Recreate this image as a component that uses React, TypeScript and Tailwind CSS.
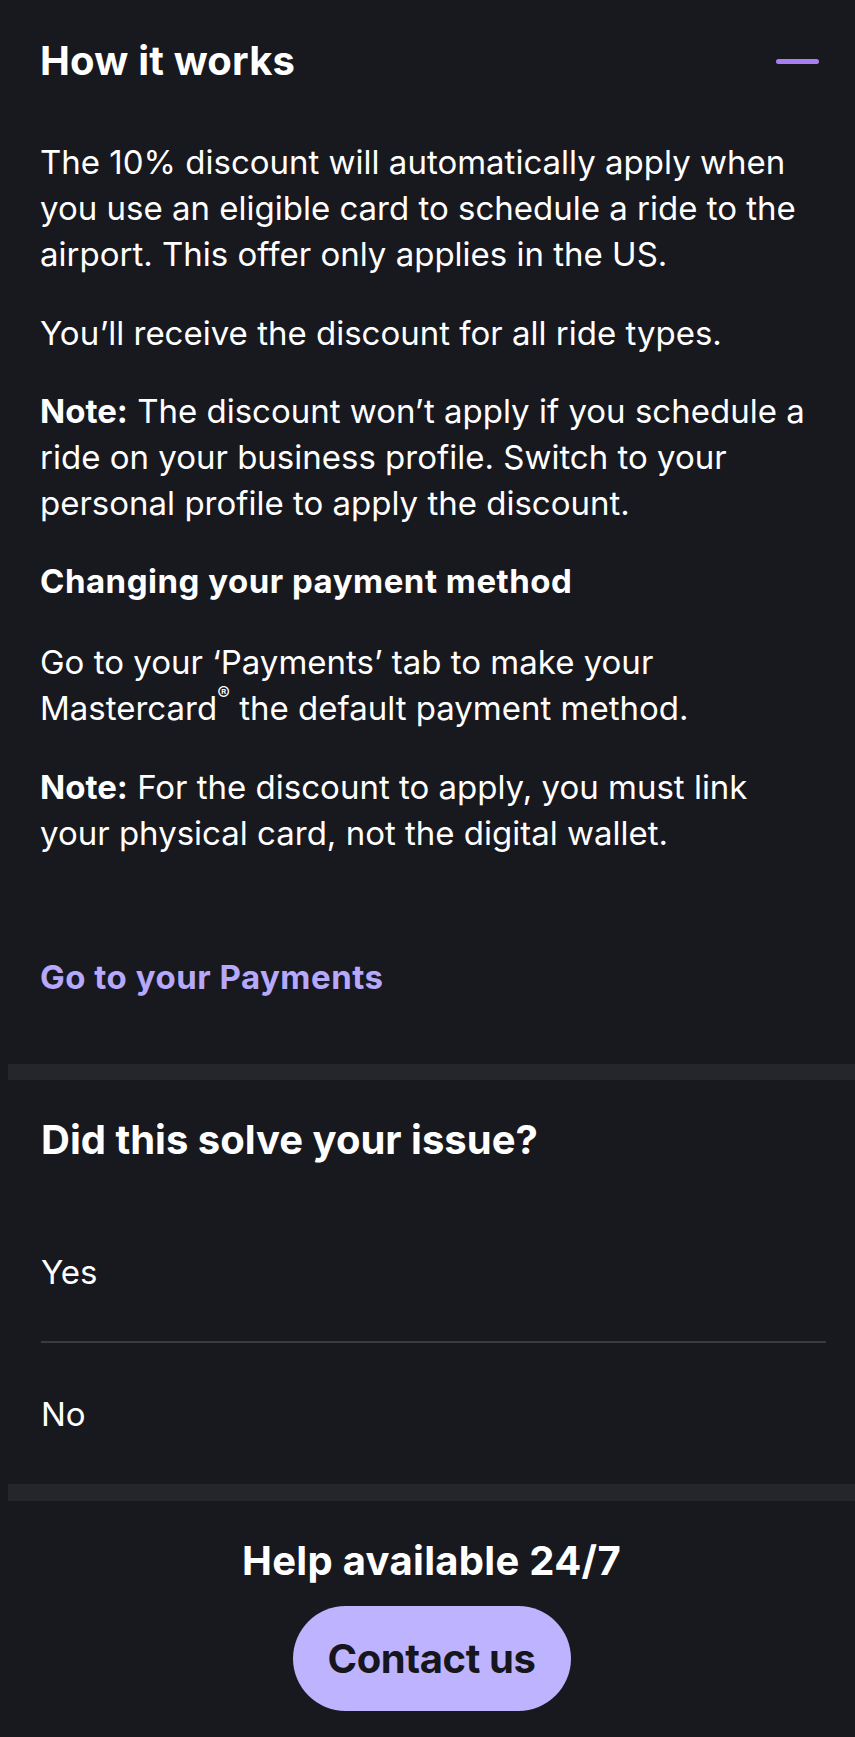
import React from "react";

const font = { fontFamily: "Inter, 'Noto Sans', sans-serif" };

export default function App() {
  return (
    <div
      className="w-[855px] min-h-[1737px] bg-[#18181f] text-white pl-[8px]"
      style={font}
    >
      {/* How it works */}
      <section className="pl-[32px] pr-[29px] pt-[37px]">
        <div className="flex items-center justify-between h-[48px]">
          <h2 className="text-[40px] leading-[48px] font-bold tracking-[0.2px]">How it works</h2>
          <span className="block w-[43px] h-[5px] rounded-full bg-[#a77ff0] mr-[7px]" />
        </div>
        <div className="mt-[54px] text-[33px] leading-[46px] whitespace-nowrap">
          <p>
            The 10% discount will automatically apply when
            <br />
            you use an eligible card to schedule a ride to the
            <br />
            airport. This offer only applies in the US.
          </p>
          <p className="mt-[33px]">You’ll receive the discount for all ride types.</p>
          <p className="mt-[32px]">
            <span className="font-bold">Note:</span> The discount won’t apply if you schedule a
            <br />
            ride on your business profile. Switch to your
            <br />
            personal profile to apply the discount.
          </p>
          <p className="mt-[32px] font-bold tracking-[0.5px]">Changing your payment method</p>
          <p className="mt-[35px]">
            Go to your ‘Payments’ tab to make your
            <br />
            Mastercard<sup className="text-[19px] align-[11px]">®</sup> the default payment method.
          </p>
          <p className="mt-[33px]">
            <span className="font-bold">Note:</span> For the discount to apply, you must link
            <br />
            your physical card, not the digital wallet.
          </p>
          <a className="block mt-[98px] font-bold tracking-[0.5px] text-[#b6a8fb]">Go to your Payments</a>
        </div>
        <div className="h-[64px]" />
      </section>

      <div className="h-[16px] bg-[#25262b]" />

      {/* Did this solve */}
      <section className="pl-[33px] pr-[29px] pt-[36px]">
        <h2 className="text-[40px] leading-[48px] font-bold">Did this solve your issue?</h2>
        <div className="mt-[39px] text-[33px] leading-[46px]">
          <div className="py-[46px]">Yes</div>
          <div className="h-[2px] bg-[#3a3b40]" />
          <div className="pt-[48px] pb-[47px]">No</div>
        </div>
      </section>

      <div className="h-[17px] bg-[#25262b]" />

      {/* Help */}
      <section className="flex flex-col items-center pt-[36px] pb-[25px]">
        <h2 className="text-[40px] leading-[48px] font-bold tracking-[0.3px]">Help available 24/7</h2>
        <button className="mt-[21px] w-[278px] h-[105px] rounded-full bg-[#bdb3ff] text-[#17161d] text-[40px] font-bold tracking-[-0.4px]">
          Contact us
        </button>
      </section>
    </div>
  );
}
